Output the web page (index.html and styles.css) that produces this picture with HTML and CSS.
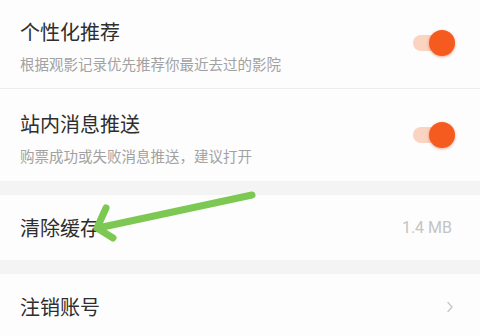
FILE: index.html
```html
<!DOCTYPE html>
<html lang="zh-CN">
<head>
    <meta charset="UTF-8">
    <meta name="viewport" content="width=device-width, initial-scale=1.0">
    <title>设置</title>
    <link rel="stylesheet" href="styles.css">
</head>
<body>

<div class="settings">
    <div class="group">
        <div class="row switch-row">
            <div class="text">
                <div class="title">个性化推荐</div>
                <div class="desc">根据观影记录优先推荐你最近去过的影院</div>
            </div>
            <div class="toggle on"><span class="knob"></span></div>
        </div>
        <div class="row switch-row">
            <div class="text">
                <div class="title">站内消息推送</div>
                <div class="desc">购票成功或失败消息推送，建议打开</div>
            </div>
            <div class="toggle on"><span class="knob"></span></div>
        </div>
    </div>

    <div class="group">
        <div class="row simple-row">
            <div class="title">清除缓存</div>
            <div class="value">1.4 MB</div>
        </div>
    </div>

    <div class="group">
        <div class="row simple-row">
            <div class="title">注销账号</div>
            <svg class="chevron" width="8" height="12" viewBox="0 0 8 12">
                <path d="M2 1.5 L6 6 L2 10.5" fill="none" stroke="#c8c8c8" stroke-width="1.4" stroke-linecap="round" stroke-linejoin="round"/>
            </svg>
        </div>
    </div>
</div>

<!-- стрілка-пояснення поверх списку -->
<svg class="hint-arrow" width="480" height="336" viewBox="0 0 480 336">
    <g fill="none" stroke="#7dc853" stroke-width="7" stroke-linecap="round" stroke-linejoin="round">
        <path d="M252 195 L98 228"/>
        <path d="M106 208 L97 228 L113 238"/>
    </g>
</svg>

</body>
</html>
```

FILE: styles.css
```css
body {
    margin: 0;
    background-color: #f4f4f4;
    font-family: "Noto Sans CJK SC", "Noto Sans", sans-serif;
    color: #2e2e2e;
    overflow: hidden;
}

.settings {
    margin-top: -3px;
}

.group {
    background-color: #fdfdfd;
    margin-bottom: 14px;
}

.row {
    display: flex;
    align-items: center;
    justify-content: space-between;
    padding: 0 25px 0 20px;
}

.switch-row {
    height: 92px;
    box-sizing: border-box;
    padding-top: 6px;
    border-bottom: 1px solid #ececec;
}

.switch-row:last-child {
    border-bottom: none;
}

.simple-row {
    height: 65px;
}

.title {
    font-size: 20px;
    line-height: 28px;
}

.desc {
    margin-top: 8px;
    font-size: 14.5px;
    line-height: 20px;
    color: #a2a2a2;
}

.value {
    font-family: "Roboto", "Liberation Sans", sans-serif;
    font-size: 16px;
    color: #c4c4c4;
    margin-right: 3px;
}

.toggle {
    position: relative;
    width: 42px;
    height: 16px;
    border-radius: 8px;
    background-color: #fbd3c1;
    margin-bottom: 6px;
}

.toggle .knob {
    position: absolute;
    right: 0;
    top: -5px;
    width: 26px;
    height: 26px;
    border-radius: 50%;
    background-color: #f55b1f;
    box-shadow: 0 1px 3px rgba(200, 60, 10, 0.45);
}

.chevron {
    margin-right: 1px;
}

.hint-arrow {
    position: absolute;
    top: 0;
    left: 0;
}
```
